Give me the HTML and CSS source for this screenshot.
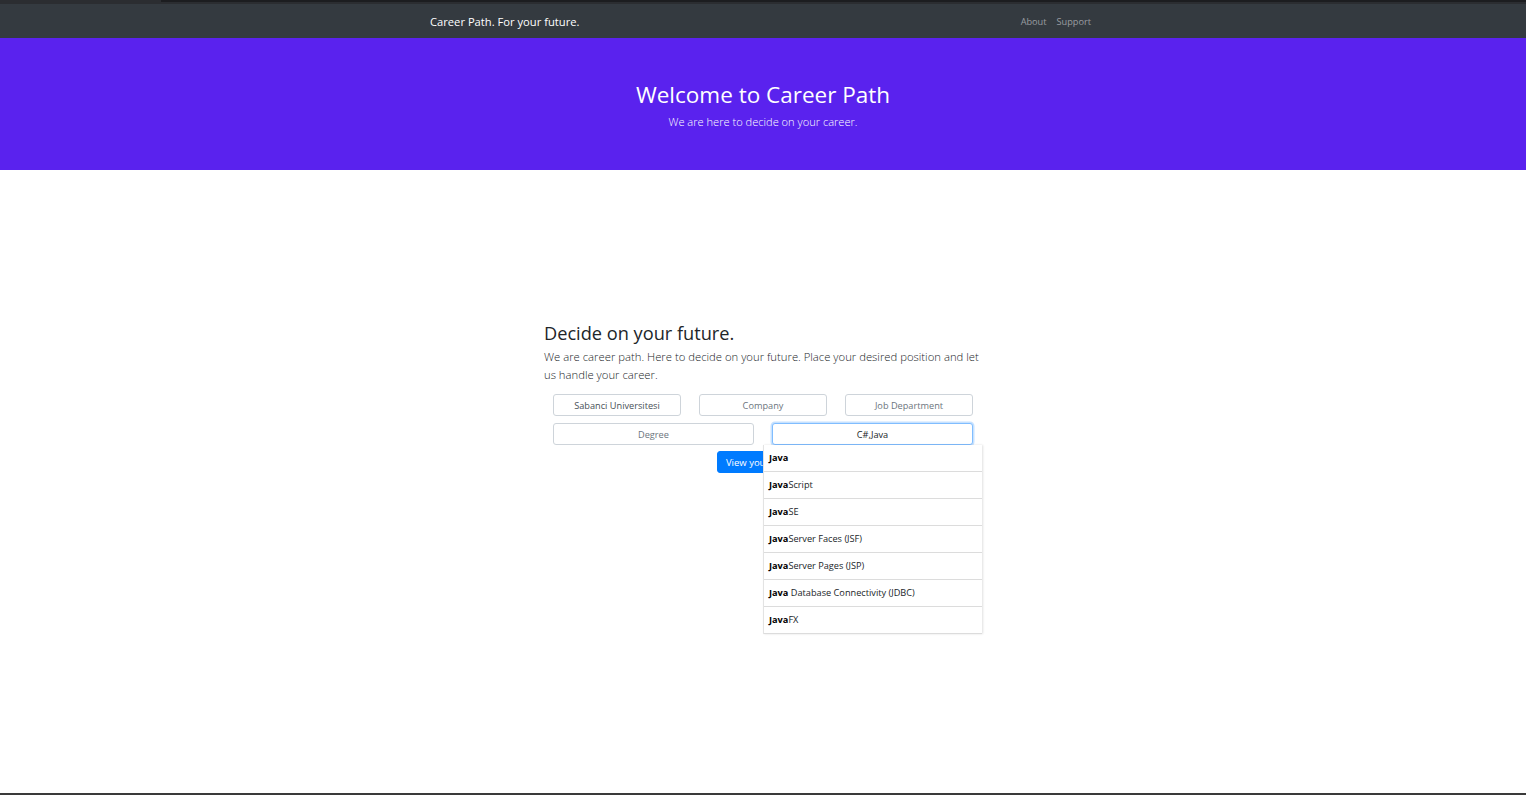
FILE: index.html
```html
<!DOCTYPE html>
<html lang="en">
<head>
<meta charset="utf-8">
<title>Career Path</title>
<link rel="stylesheet" href="styles.css">
</head>
<body>
<div class="chrome"><div class="chrome-line"></div></div>
<nav class="navbar">
  <div class="container nav-inner">
    <a class="brand" href="#">Career Path. For your future.</a>
    <div class="nav-links">
      <a href="#">About</a>
      <a href="#">Support</a>
    </div>
  </div>
</nav>
<header class="jumbotron">
  <h1>Welcome to Career Path</h1>
  <p>We are here to decide on your career.</p>
</header>
<main class="content">
  <h2>Decide on your future.</h2>
  <p class="lead">We are career path. Here to decide on your future. Place your desired position and let us handle your career.</p>
  <form class="search">
    <div class="row row-3">
      <input class="field" type="text" value="Sabanci Universitesi">
      <input class="field" type="text" placeholder="Company">
      <input class="field" type="text" placeholder="Job Department">
    </div>
    <div class="row row-2">
      <input class="field" type="text" placeholder="Degree">
      <div class="ac-wrap">
        <input class="field focus" type="text" value="C#,Java">
        <ul class="ac-list">
          <li><b>Java</b></li>
          <li><b>Java</b>Script</li>
          <li><b>Java</b>SE</li>
          <li><b>Java</b>Server Faces (JSF)</li>
          <li><b>Java</b>Server Pages (JSP)</li>
          <li><b>Java</b> Database Connectivity (JDBC)</li>
          <li><b>Java</b>FX</li>
        </ul>
      </div>
    </div>
    <div class="actions">
      <button type="button" class="btn">View your career</button>
    </div>
  </form>
</main>
<div class="spacer"></div>
<div class="taskbar"></div>
</body>
</html>
```
FILE: styles.css
```css
html, body {
  margin: 0;
  padding: 0;
  height: 795px;
  overflow: hidden;
  background: #fff;
  font-family: "Open Sans", "Noto Sans", Arial, sans-serif;
  color: #212529;
}
body {
  display: flex;
  flex-direction: column;
}
.chrome {
  height: 4px;
  background: #2b2d31;
}
.chrome-line {
  margin-left: 161px;
  height: 2px;
  background: #1c1d20;
}
.navbar {
  height: 34px;
  background: #343a40;
  display: flex;
  align-items: center;
}
.container {
  width: 666px;
  margin: 0 auto;
}
.nav-inner {
  display: flex;
  justify-content: space-between;
  align-items: center;
}
.brand {
  color: #fff;
  text-decoration: none;
  font-size: 11.2px;
  line-height: 16px;
  padding-top: 1px;
}
.nav-links {
  display: flex;
  gap: 10px;
  padding-right: 5px;
}
.nav-links a {
  color: #9a9da0;
  text-decoration: none;
  font-size: 9.2px;
}
.jumbotron {
  background: #5a22ee;
  height: 132px;
  color: #fff;
  text-align: center;
  display: flex;
  flex-direction: column;
  align-items: center;
  padding-top: 42px;
  box-sizing: border-box;
}
.jumbotron h1 {
  margin: 0;
  font-weight: 400;
  font-size: 22.5px;
  line-height: 30px;
}
.jumbotron p {
  margin: 0;
  font-size: 11.1px;
  line-height: 24px;
  font-weight: 300;
}
.content {
  width: 438px;
  margin: 151px auto 0;
}
.content h2 {
  margin: 0;
  font-weight: 400;
  font-size: 18.2px;
  line-height: 24px;
  color: #212529;
}
.lead {
  margin: 3px 0 0;
  font-size: 11.3px;
  line-height: 18px;
  font-weight: 300;
  color: #212529;
}
.search {
  padding: 10px 9px 0;
  display: flex;
  flex-direction: column;
  gap: 7px;
}
.row {
  display: grid;
  column-gap: 18px;
}
.row-3 { grid-template-columns: repeat(3, 1fr); }
.row-2 { grid-template-columns: 1fr 1fr; }
.field {
  display: block;
  box-sizing: border-box;
  width: 100%;
  height: 22px;
  border: 1px solid #ced4da;
  border-radius: 3px;
  background: #fff;
  text-align: center;
  font-family: inherit;
  font-size: 9.2px;
  color: #495057;
  padding: 0 4px;
  outline: none;
}
.field::placeholder {
  color: #6c757d;
}
.field.focus {
  border-color: #80bdff;
  box-shadow: 0 0 0 1.5px rgba(0, 123, 255, 0.22);
  color: #212529;
}
.ac-wrap {
  position: relative;
  height: 22px;
}
.ac-list {
  position: absolute;
  left: -9px;
  top: 22px;
  width: 219px;
  margin: 0;
  padding: 0;
  list-style: none;
  background: #fff;
  border-left: 1px solid #e3e3e3;
  box-shadow: 1px 0 2px rgba(0,0,0,0.12);
  z-index: 5;
  box-sizing: border-box;
}
.ac-list li {
  height: 27px;
  line-height: 26px;
  padding-left: 5px;
  font-size: 9.2px;
  color: #212529;
  border-bottom: 1px solid #dcdcdc;
  box-sizing: border-box;
}
.ac-list b {
  font-weight: 700;
  color: #000;
}
.actions {
  display: flex;
  justify-content: center;
  margin-top: -1px;
}
.btn {
  display: block;
  height: 22px;
  background: #007bff;
  color: #fff;
  border: 1px solid #007bff;
  border-radius: 3px;
  font-family: inherit;
  font-size: 9.5px;
  padding: 0 8px;
}
.spacer {
  flex: 1;
}
.taskbar {
  height: 2px;
  background: #3a3a3a;
}
```
